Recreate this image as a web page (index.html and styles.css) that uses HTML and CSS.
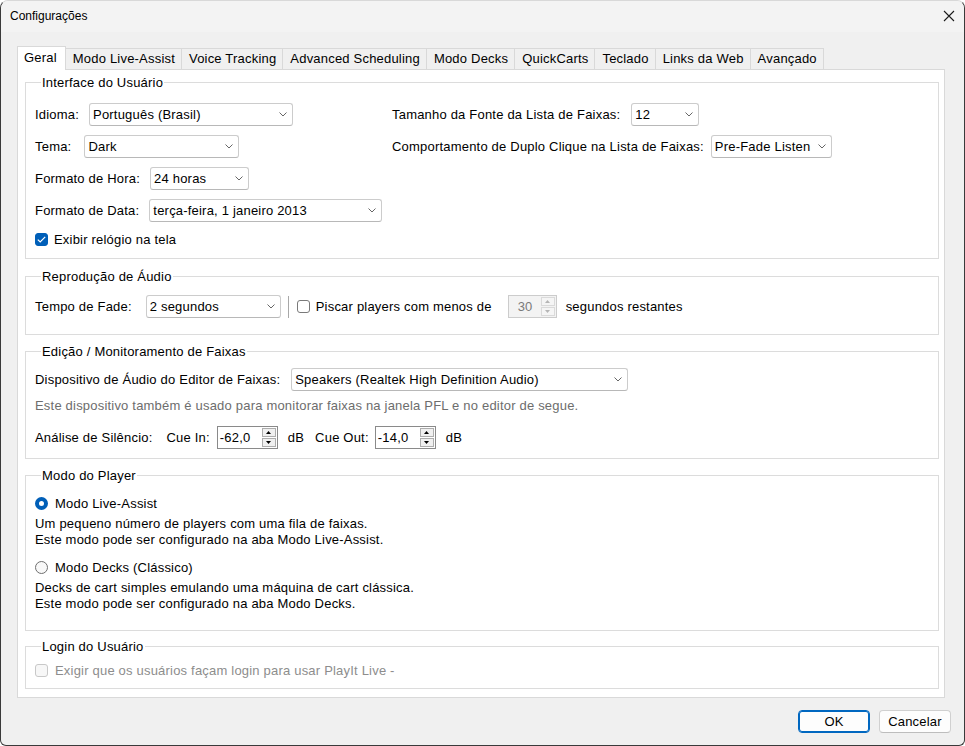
FILE: index.html
```html
<!DOCTYPE html>
<html lang="pt-BR">
<head>
<meta charset="utf-8">
<title>Configurações</title>
<link rel="stylesheet" href="styles.css">
</head>
<body>
<div class="window">
  <div class="titlebar">
    <span class="title">Configurações</span>
    <svg class="close" width="12" height="12" viewBox="0 0 12 12"><path d="M1 1 L11 11 M11 1 L1 11" stroke="#1b1b1b" stroke-width="1.1" fill="none"/></svg>
  </div>
  <div class="content">
    <div class="tabs">
      <div class="tab active">Geral</div>
      <div class="tab">Modo Live-Assist</div>
      <div class="tab">Voice Tracking</div>
      <div class="tab">Advanced Scheduling</div>
      <div class="tab">Modo Decks</div>
      <div class="tab">QuickCarts</div>
      <div class="tab">Teclado</div>
      <div class="tab">Links da Web</div>
      <div class="tab">Avançado</div>
    </div>
    <div class="panel">
      <fieldset class="group g1">
        <legend>Interface do Usuário</legend>
        <div class="cols">
          <div class="col-left">
            <div class="row"><span class="lbl lbl-idioma">Idioma:</span><div class="select w-idioma"><span>Português (Brasil)</span><svg class="chev" width="8" height="5" viewBox="0 0 8 5"><path d="M0.5 0.5 L4 4 L7.5 0.5" stroke="#666" fill="none"/></svg></div></div>
            <div class="row"><span class="lbl lbl-tema">Tema:</span><div class="select w-tema"><span>Dark</span><svg class="chev" width="8" height="5" viewBox="0 0 8 5"><path d="M0.5 0.5 L4 4 L7.5 0.5" stroke="#666" fill="none"/></svg></div></div>
            <div class="row"><span class="lbl lbl-hora">Formato de Hora:</span><div class="select w-hora"><span>24 horas</span><svg class="chev" width="8" height="5" viewBox="0 0 8 5"><path d="M0.5 0.5 L4 4 L7.5 0.5" stroke="#666" fill="none"/></svg></div></div>
            <div class="row"><span class="lbl lbl-hora">Formato de Data:</span><div class="select w-data"><span>terça-feira, 1 janeiro 2013</span><svg class="chev" width="8" height="5" viewBox="0 0 8 5"><path d="M0.5 0.5 L4 4 L7.5 0.5" stroke="#666" fill="none"/></svg></div></div>
            <div class="check-row g1-check"><span class="cb checked"><svg width="9" height="7" viewBox="0 0 9 7"><path d="M0.8 3.6 L3.2 6 L8.2 0.9" stroke="#fff" stroke-width="1.2" fill="none"/></svg></span>Exibir relógio na tela</div>
          </div>
          <div class="col-right">
            <div class="row"><span class="lbl">Tamanho da Fonte da Lista de Faixas:</span><div class="select w-tam"><span>12</span><svg class="chev" width="8" height="5" viewBox="0 0 8 5"><path d="M0.5 0.5 L4 4 L7.5 0.5" stroke="#666" fill="none"/></svg></div></div>
            <div class="row"><span class="lbl lbl-tight">Comportamento de Duplo Clique na Lista de Faixas:</span><div class="select w-comp"><span>Pre-Fade Listen</span><svg class="chev" width="8" height="5" viewBox="0 0 8 5"><path d="M0.5 0.5 L4 4 L7.5 0.5" stroke="#666" fill="none"/></svg></div></div>
          </div>
        </div>
      </fieldset>

      <fieldset class="group g2">
        <legend>Reprodução de Áudio</legend>
        <div class="row g2-row">
          <span class="lbl lbl-fade">Tempo de Fade:</span>
          <div class="select w-fade"><span>2 segundos</span><svg class="chev" width="8" height="5" viewBox="0 0 8 5"><path d="M0.5 0.5 L4 4 L7.5 0.5" stroke="#666" fill="none"/></svg></div>
          <span class="vsep"></span>
          <span class="cb"></span>
          <span class="piscar">Piscar players com menos de</span>
          <div class="spin disabled w-spin30"><span class="spin-val">30</span><span class="spin-btns"><span class="sb"><svg width="5" height="3" viewBox="0 0 5 3"><path d="M0 3 L2.5 0 L5 3 Z" fill="#b5b5b5"/></svg></span><span class="sb"><svg width="5" height="3" viewBox="0 0 5 3"><path d="M0 0 L2.5 3 L5 0 Z" fill="#b5b5b5"/></svg></span></span></div>
          <span class="after-spin">segundos restantes</span>
        </div>
      </fieldset>

      <fieldset class="group g3">
        <legend>Edição / Monitoramento de Faixas</legend>
        <div class="row g3-row1">
          <span class="lbl">Dispositivo de Áudio do Editor de Faixas:</span>
          <div class="select w-disp"><span>Speakers (Realtek High Definition Audio)</span><svg class="chev" width="8" height="5" viewBox="0 0 8 5"><path d="M0.5 0.5 L4 4 L7.5 0.5" stroke="#666" fill="none"/></svg></div>
        </div>
        <div class="note">Este dispositivo também é usado para monitorar faixas na janela PFL e no editor de segue.</div>
        <div class="row g3-row3">
          <span class="lbl-sil">Análise de Silêncio:</span>
          <span class="cue-in">Cue In:</span>
          <div class="spin w-cue"><span class="spin-val">-62,0</span><span class="spin-btns"><span class="sb"><svg width="5" height="3" viewBox="0 0 5 3"><path d="M0 3 L2.5 0 L5 3 Z" fill="#000"/></svg></span><span class="sb"><svg width="5" height="3" viewBox="0 0 5 3"><path d="M0 0 L2.5 3 L5 0 Z" fill="#000"/></svg></span></span></div>
          <span class="db db-first">dB</span>
          <span class="cue-out">Cue Out:</span>
          <div class="spin w-cue"><span class="spin-val">-14,0</span><span class="spin-btns"><span class="sb"><svg width="5" height="3" viewBox="0 0 5 3"><path d="M0 3 L2.5 0 L5 3 Z" fill="#000"/></svg></span><span class="sb"><svg width="5" height="3" viewBox="0 0 5 3"><path d="M0 0 L2.5 3 L5 0 Z" fill="#000"/></svg></span></span></div>
          <span class="db">dB</span>
        </div>
      </fieldset>

      <fieldset class="group g4">
        <legend>Modo do Player</legend>
        <div class="radio-row r1"><span class="radio checked"></span>Modo Live-Assist</div>
        <div class="desc">Um pequeno número de players com uma fila de faixas.<br>Este modo pode ser configurado na aba Modo Live-Assist.</div>
        <div class="radio-row r2"><span class="radio"></span>Modo Decks (Clássico)</div>
        <div class="desc">Decks de cart simples emulando uma máquina de cart clássica.<br>Este modo pode ser configurado na aba Modo Decks.</div>
      </fieldset>

      <fieldset class="group g5">
        <legend>Login do Usuário</legend>
        <div class="check-row g5-check disabled-text"><span class="cb cb-disabled"></span>Exigir que os usuários façam login para usar PlayIt Live -</div>
      </fieldset>
    </div>
    <div class="footer">
      <div class="btn btn-primary">OK</div>
      <div class="btn">Cancelar</div>
    </div>
  </div>
</div>
</body>
</html>
```

FILE: styles.css
```css
* { box-sizing: border-box; }

html, body {
  margin: 0;
  padding: 0;
  background: #ffffff;
}

body {
  font-family: "Liberation Sans", Arial, sans-serif;
  font-size: 13px;
  letter-spacing: 0.2px;
  color: #000;
}

.window {
  width: 965px;
  height: 746px;
  border: 1px solid #3a3a3a;
  border-top-color: #d8d8d8;
  border-radius: 8px 8px 6px 6px;
  background: #f0f0f0;
  display: flex;
  flex-direction: column;
  overflow: hidden;
}

.titlebar {
  height: 31px;
  flex: none;
  background: #f3f3f3;
  display: flex;
  align-items: center;
  justify-content: space-between;
  padding: 0 8px 1px 9px;
}

.title {
  font-size: 12px;
  line-height: 14px;
  letter-spacing: 0;
}

.close {
  display: block;
  margin-right: 1px;
}

.content {
  flex: 1;
  display: flex;
  flex-direction: column;
  padding: 14px 0 0 16px;
}

.tabs {
  display: flex;
  align-items: flex-end;
  height: 23px;
  padding-left: 0;
}

.tab {
  height: 21px;
  line-height: 20px;
  padding: 0 6px 0 7px;
  border: 1px solid #d9d9d9;
  border-bottom: none;
  margin-left: -1px;
  background: #f0f0f0;
  white-space: nowrap;
}

.tab.active {
  height: 24px;
  line-height: 22px;
  margin-left: 0;
  margin-bottom: -1px;
  padding: 0 8px 0 6px;
  background: #fff;
  position: relative;
  z-index: 1;
}

.panel {
  width: 928px;
  height: 629px;
  flex: none;
  border: 1px solid #d9d9d9;
  background: #fff;
  padding: 5px 5px 0 7px;
}

.group {
  border: 1px solid #dcdcdc;
  margin: 0;
  padding: 0 9px;
  min-width: 0;
}

.group legend {
  padding: 0 1px;
  margin-left: 6px;
  line-height: 15px;
}

.g1 { height: 184px; margin-bottom: 10px; }
.g2 { height: 66px; margin-bottom: 9px; }
.g3 { height: 115px; margin-bottom: 9px; }
.g4 { height: 163px; margin-bottom: 8px; }
.g5 { height: 50px; }

.cols {
  display: flex;
  padding-top: 13px;
}

.col-left {
  width: 357px;
  flex: none;
}

.row {
  display: flex;
  align-items: center;
  height: 23px;
  white-space: nowrap;
}

.row + .row { margin-top: 9px; }

.lbl { margin-right: 11px; }
.lbl-idioma { margin-right: 10px; }
.lbl-tema { margin-right: 13px; }
.lbl-hora { margin-right: 10px; }
.lbl-tight { margin-right: 7px; }
.lbl-fade { margin-right: 14px; }

.select {
  display: flex;
  align-items: center;
  justify-content: space-between;
  height: 23px;
  border: 1px solid #cccccc;
  border-bottom-color: #b8b8b8;
  border-radius: 3px;
  padding: 0 0 0 3px;
  background: #fff;
  white-space: nowrap;
  overflow: hidden;
}

.chev {
  flex: none;
  margin-right: 5px;
  display: block;
}

.w-idioma { width: 204px; }
.w-tema { width: 155px; }
.w-hora { width: 99px; }
.w-data { width: 233px; }
.w-tam { width: 68px; }
.w-comp { width: 121px; }
.w-fade { width: 135px; }
.w-disp { width: 337px; }

.check-row {
  display: flex;
  align-items: center;
  height: 16px;
  white-space: nowrap;
}

.g1-check { margin-top: 9px; }
.g5-check { margin-top: 8px; }

.cb {
  width: 13px;
  height: 13px;
  flex: none;
  border: 1px solid #7a7a7a;
  border-radius: 3px;
  background: #fff;
  margin-right: 6px;
  display: flex;
  align-items: center;
  justify-content: center;
}

.cb.checked {
  background: #005fb8;
  border-color: #005fb8;
}

.cb svg { display: block; }

.cb-disabled {
  border-color: #c8c8c8;
  background: #f7f7f7;
  margin-right: 7px;
}

.disabled-text { color: #8d8d8d; }

.g2-row { margin-top: 11px; }

.vsep {
  width: 1px;
  height: 22px;
  background: #a8a8a8;
  margin: 0 8px 0 7px;
  flex: none;
}

.piscar { margin-right: 16px; }

.spin {
  display: flex;
  align-items: center;
  justify-content: space-between;
  height: 23px;
  border: 1px solid #8a8a8a;
  background: #fff;
  padding: 0 1px 0 2px;
  flex: none;
}

.spin.disabled {
  border-color: #cccccc;
  background: #f3f3f3;
  color: #7a7a7a;
}

.spin.disabled .spin-val { padding-left: 7px; }

.spin-btns {
  display: flex;
  flex-direction: column;
  gap: 1px;
}

.sb {
  width: 14px;
  height: 9px;
  border: 1px solid #adadad;
  background: #f0f0f0;
  display: flex;
  align-items: center;
  justify-content: center;
}

.sb svg { display: block; }

.spin.disabled .sb {
  border-color: #dadada;
  background: #f5f5f5;
}

.w-spin30 { width: 49px; margin-right: 9px; }
.w-cue { width: 61px; }

.g3-row1 { margin-top: 9px; }

.note {
  color: #6d6d6d;
  line-height: 16px;
  margin-top: 7px;
  white-space: nowrap;
}

.g3-row3 { margin-top: 12px; }

.lbl-sil { margin-right: 14px; }
.cue-in { margin-right: 7px; }
.cue-out { margin-right: 6px; }
.db { margin-left: 10px; }
.db-first { margin-right: 11px; }

.radio-row {
  display: flex;
  align-items: center;
  height: 16px;
  white-space: nowrap;
}

.r1 { margin-top: 12px; }
.r2 { margin-top: 11px; }

.radio {
  width: 13px;
  height: 13px;
  flex: none;
  border-radius: 50%;
  border: 1px solid #6f6f6f;
  background: #f8f8f8;
  margin-right: 7px;
}

.radio.checked {
  border: 4px solid #005fb8;
  background: #fff;
}

.desc {
  line-height: 16px;
  margin-top: 5px;
  white-space: nowrap;
}

.footer {
  display: flex;
  justify-content: flex-end;
  gap: 9px;
  padding: 12px 13px 0 0;
}

.btn {
  width: 72px;
  height: 23px;
  border: 1px solid #d0d0d0;
  border-bottom-color: #bdbdbd;
  border-radius: 4px;
  background: #fdfdfd;
  display: flex;
  align-items: center;
  justify-content: center;
}

.btn-primary {
  border: 1px solid #0067c0;
  box-shadow: inset 0 0 0 1px #0067c0;
}
```
